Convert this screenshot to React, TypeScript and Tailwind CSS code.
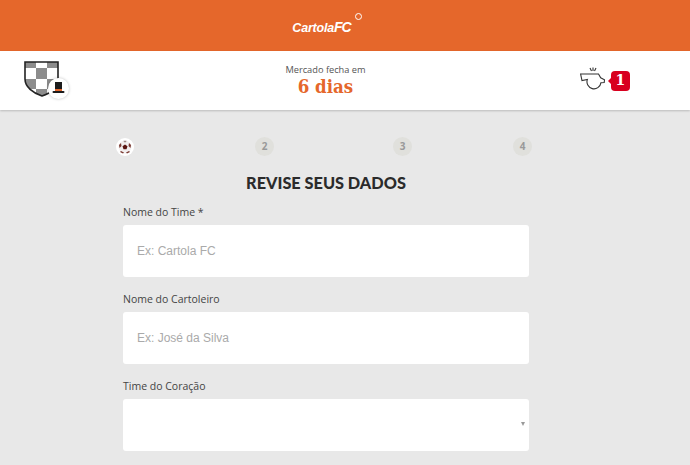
const FIELDS = [
  { label: "Nome do Time *", placeholder: "Ex: Cartola FC" },
  { label: "Nome do Cartoleiro", placeholder: "Ex: José da Silva" },
];

function TeamBadge() {
  return (
    <div className="relative w-[46px] h-[42px]">
      <svg width="36" height="38" viewBox="0 0 36 38" className="absolute left-0 top-0">
        <defs>
          <clipPath id="shield">
            <path d="M1 2h33v17c0 8-7 14-16 17C9 33 1 27 1 19z" />
          </clipPath>
        </defs>
        <g clipPath="url(#shield)">
          <rect width="36" height="38" fill="#fff" />
          <rect x="1" y="2" width="11" height="6" fill="#8c8c8c" />
          <rect x="23" y="2" width="11" height="6" fill="#8c8c8c" />
          <rect x="12" y="8" width="11" height="11" fill="#8c8c8c" />
          <rect x="1" y="19" width="11" height="10" fill="#8c8c8c" />
          <rect x="23" y="19" width="11" height="10" fill="#8c8c8c" />
          <rect x="12" y="29" width="11" height="9" fill="#8c8c8c" />
        </g>
        <path d="M1 2h33v17c0 8-7 14-16 17C9 33 1 27 1 19z" fill="none" stroke="#222" strokeWidth="1.6" />
      </svg>
      <div className="absolute left-[24px] top-[18px] w-[21px] h-[21px] rounded-full bg-white shadow-[0_0_3px_rgba(0,0,0,0.25)] flex items-center justify-center">
        <svg width="15" height="15" viewBox="0 0 15 15">
          <rect x="4" y="1" width="7" height="9" fill="#1c1c1c" />
          <rect x="4" y="8" width="7" height="2" fill="#e5672b" />
          <rect x="1.5" y="10" width="12" height="2" rx="1" fill="#1c1c1c" />
        </svg>
      </div>
    </div>
  );
}

function Whistle() {
  return (
    <svg width="27" height="24" viewBox="0 0 27 24" fill="none" stroke="#333" strokeWidth="1.1" className="-mt-[3px]">
      <path d="M.6 7H18.5l2.2 3.8 3.8 2-.3 2.7-3.3.3A7 7 0 1 1 7.4 12.4L2 13.5z" fill="#fff" />
      <path d="M10 1l1.5 3M13 .5v3.5M16 1l-1.5 3" />
    </svg>
  );
}

function SoccerBall() {
  return (
    <div className="w-[18px] h-[18px] rounded-full bg-white flex items-center justify-center">
      <svg width="14" height="14" viewBox="0 0 14 14">
        <circle cx="7" cy="7" r="6.5" fill="#f2eeee" />
        <path d="M7 4.5l2.5 1.8-1 2.9h-3l-1-2.9z" fill="#5a1410" />
        <path d="M1 5l2-2 .5 3-2 2zM13 5l-2-2-.5 3 2 2zM3 11l3 1.5-1 1-3-1.5zM11 11l-3 1.5 1 1 3-1.5z" fill="#7a3a32" />
        <path d="M5.5 .8h3l-.5 1.4H6z" fill="#a08a86" />
      </svg>
    </div>
  );
}

function Step({ n }: { n: number }) {
  return (
    <div className="w-[19px] h-[19px] rounded-full bg-[#e0e0dc] flex items-center justify-center text-[10px] font-bold text-[#999] font-['Open_Sans',sans-serif]">
      {n}
    </div>
  );
}

export default function App() {
  return (
    <div className="w-[690px] h-[465px] overflow-hidden bg-[#e8e8e8] font-['Open_Sans',sans-serif]">
      <header className="h-[51px] bg-[#e5672b] flex items-center justify-center">
        <div className="relative mt-[3px] -ml-[47px] text-white italic font-black leading-none font-['Liberation_Sans',sans-serif] flex items-baseline">
          <span className="text-[12.5px] tracking-[-0.2px]">Cartola</span>
          <span className="text-[14px] tracking-[-1px]">FC</span>
          <span className="absolute -right-[11px] -top-[7px] w-[7px] h-[7px] rounded-full border border-white" />
        </div>
      </header>

      <div className="h-[59px] bg-white shadow-[0_1px_2px_rgba(0,0,0,0.2)] flex items-center justify-between pl-[24px] pr-[60px]">
        <TeamBadge />
        <div className="flex flex-col items-center ml-[1px] -mt-[1px]">
          <span className="text-[9.25px] leading-[12px] text-[#555]">Mercado fecha em</span>
          <span className="text-[18.5px] leading-[21px] font-bold text-[#e5672b] font-['DejaVu_Serif',serif] font-stretch-condensed">6 dias</span>
        </div>
        <div className="flex items-center gap-[4px]">
          <Whistle />
          <div className="relative w-[19px] h-[20px] rounded-[4px] bg-[#d8001f] flex items-center justify-center text-white text-[14px] font-bold font-['DejaVu_Serif',serif]">
            1
            <span className="absolute -left-[3px] top-[7px] w-0 h-0 border-y-[3px] border-y-transparent border-r-[3px] border-r-[#d8001f]" />
          </div>
        </div>
      </div>

      <main className="pt-[27px]">
        <div className="ml-[116px] flex items-center">
          <SoccerBall />
          <div className="ml-[121px]"><Step n={2} /></div>
          <div className="ml-[119px]"><Step n={3} /></div>
          <div className="ml-[101px]"><Step n={4} /></div>
        </div>

        <h1 className="w-[406px] ml-[123px] mt-[17px] text-center text-[16.3px] leading-[20px] font-black text-[#2b2b2b] font-['Lato',sans-serif]">
          REVISE SEUS DADOS
        </h1>

        <form className="w-[406px] ml-[123px] mt-[12px] flex flex-col gap-[15px]">
          {FIELDS.map((f) => (
            <div key={f.label}>
              <label className="block text-[10.5px] leading-[14px] mb-[6px] text-[#444]">{f.label}</label>
              <input
                type="text"
                placeholder={f.placeholder}
                className="w-full h-[52px] px-[14px] rounded-[3px] bg-white text-[12px] outline-none font-['Liberation_Sans',sans-serif] placeholder:text-[#aaa]"
              />
            </div>
          ))}
          <div>
            <label className="block text-[10.5px] leading-[14px] mb-[6px] text-[#444]">Time do Coração</label>
            <div className="relative h-[52px] rounded-[3px] bg-white">
              <span className="absolute right-[4px] top-[23px] w-0 h-0 border-x-[2.5px] border-x-transparent border-t-[4px] border-t-[#999]" />
            </div>
          </div>
        </form>
      </main>
    </div>
  );
}
